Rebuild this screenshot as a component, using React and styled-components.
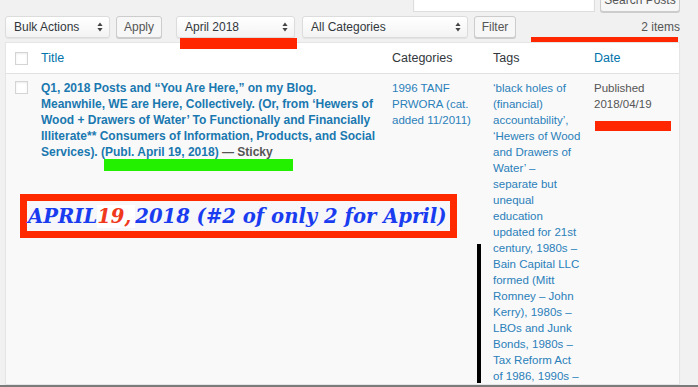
import React from "react"
import styled, { createGlobalStyle } from "styled-components"

const GlobalStyle = createGlobalStyle`
  html, body {
    margin: 0;
    padding: 0;
  }
  body {
    background: #f1f1f1;
    font-family: "Liberation Sans", Arial, sans-serif;
    color: #32373c;
  }
`

const Screen = styled.div`
  position: relative;
  width: 698px;
  height: 387px;
  box-sizing: border-box;
  overflow: hidden;
  padding: 0 18px 0 5px;
  border-bottom: 2px solid #7b7b7b;
`

const SearchRow = styled.div`
  display: flex;
  justify-content: flex-end;
  gap: 5px;
  height: 24px;
  margin-top: -12px;
`

const SearchInput = styled.div`
  width: 182px;
  box-sizing: border-box;
  background: #fff;
  border: 1px solid #ddd;
  box-shadow: inset 0 1px 2px rgba(0, 0, 0, 0.07);
`

const Button = styled.button`
  box-sizing: border-box;
  width: ${(p) => p.$width}px;
  height: ${(p) => p.$height || 22}px;
  margin: 0;
  margin-left: ${(p) => p.$gap || 0}px;
  padding: 0;
  background: #f7f7f7;
  border: 1px solid #ccc;
  border-radius: 3px;
  box-shadow: 0 1px 0 #ccc;
  color: #555;
  font-family: "Liberation Sans", Arial, sans-serif;
  font-size: 12px;
`

const Toolbar = styled.div`
  display: flex;
  align-items: center;
  height: 22px;
  margin-top: 4px;
`

const SelectBox = styled.div`
  box-sizing: border-box;
  display: flex;
  align-items: center;
  justify-content: space-between;
  width: ${(p) => p.$width}px;
  height: 22px;
  margin-left: ${(p) => p.$gap || 0}px;
  padding: 0 6px 0 8px;
  background: linear-gradient(#ffffff, #f3f3f3);
  border: 1px solid #dcdcdc;
  border-radius: 3px;
  box-shadow: 0 1px 1px rgba(0, 0, 0, 0.06);
  font-size: 12px;
  color: #32373c;
`

const Spacer = styled.div`
  flex: 1;
`

const Count = styled.span`
  font-size: 12px;
  color: #555;
`

const Table = styled.div`
  margin-top: 4px;
  background: #fff;
  border: 1px solid #e5e5e5;
  box-shadow: 0 1px 1px rgba(0, 0, 0, 0.04);
`

const Row = styled.div`
  display: grid;
  grid-template-columns: 27px 351px 101px 101px 1fr;
  background: ${(p) => (p.$alt ? "#f9f9f9" : "#fff")};
  border-bottom: ${(p) => (p.$head ? "1px solid #e1e1e1" : "none")};
  min-height: ${(p) => (p.$head ? "30px" : "auto")};
  align-items: ${(p) => (p.$head ? "center" : "start")};
`

const Cell = styled.div`
  padding: ${(p) => (p.$head ? "0 8px" : "6px 8px 0")};
  padding-left: ${(p) => (p.$check ? 9 : 8)}px;
  font-size: ${(p) => (p.$head ? 12.5 : 11.5)}px;
  line-height: 16px;
  white-space: nowrap;
  color: ${(p) => p.$color || "#32373c"};
`

const Checkbox = styled.span`
  display: block;
  width: 13px;
  height: 13px;
  box-sizing: border-box;
  margin-top: ${(p) => (p.$row ? 1 : 0)}px;
  background: #fff;
  border: 1px solid #d4d4d4;
  box-shadow: inset 0 1px 2px rgba(0, 0, 0, 0.08);
`

const RowTitle = styled.div`
  font-size: 12px;
  font-weight: bold;
  color: #1a78b0;
`

const State = styled.span`
  color: #555;
`

const Link = styled.div`
  color: #2a80b9;
`

const Mark = styled.div`
  position: absolute;
  left: ${(p) => p.$x}px;
  top: ${(p) => p.$y}px;
  width: ${(p) => p.$w}px;
  height: ${(p) => p.$h}px;
  background: ${(p) => p.$color};
`

const Callout = styled.div`
  position: absolute;
  left: 20px;
  top: 194px;
  width: 437px;
  height: 44px;
  box-sizing: border-box;
  border: 7px solid #ff2a00;
  background: #f7f7f9;
  display: flex;
  align-items: center;
  padding-left: 1px;
  font-family: "DejaVu Serif", Georgia, serif;
  font-style: italic;
  font-weight: bold;
  font-size: 19.6px;
  color: #1a3cf0;
  white-space: nowrap;
`

const Day = styled.span`
  background: #fff;
  color: #f0391c;
  padding-right: 4px;
`

const Arrows = () => (
  <svg width="6" height="10" viewBox="0 0 6 10">
    <path d="M3 0.5 L5.6 4 H0.4 Z M3 9.5 L5.6 6 H0.4 Z" fill="#444" />
  </svg>
)

const titleLines = [
  "Q1, 2018 Posts and \u201cYou Are Here,\u201d on my Blog.",
  "Meanwhile, WE are Here, Collectively. (Or, from \u2018Hewers of",
  "Wood + Drawers of Water\u2019 To Functionally and Financially",
  "Illiterate** Consumers of Information, Products, and Social",
]

const tagLines = [
  "\u2018black holes of",
  "(financial)",
  "accountability\u2019,",
  "\u2018Hewers of Wood",
  "and Drawers of",
  "Water\u2019 \u2013",
  "separate but",
  "unequal",
  "education",
  "updated for 21st",
  "century, 1980s \u2013",
  "Bain Capital LLC",
  "formed (Mitt",
  "Romney \u2013 John",
  "Kerry), 1980s \u2013",
  "LBOs and Junk",
  "Bonds, 1980s \u2013",
  "Tax Reform Act",
  "of 1986, 1990s \u2013",
]

const Lines = ({ lines }) =>
  lines.map((line) => <div key={line}>{line}</div>)

const App = () => (
  <Screen>
    <GlobalStyle />
    <SearchRow>
      <SearchInput />
      <Button $width={80} $height={24}>
        Search Posts
      </Button>
    </SearchRow>

    <Toolbar>
      <SelectBox $width={105}>
        Bulk Actions
        <Arrows />
      </SelectBox>
      <Button $width={46} $gap={6}>
        Apply
      </Button>
      <SelectBox $width={119} $gap={14}>
        April 2018
        <Arrows />
      </SelectBox>
      <SelectBox $width={166} $gap={7}>
        All Categories
        <Arrows />
      </SelectBox>
      <Button $width={42} $gap={6}>
        Filter
      </Button>
      <Spacer />
      <Count>2 items</Count>
    </Toolbar>

    <Table>
      <Row $head>
        <Cell $head $check>
          <Checkbox />
        </Cell>
        <Cell $head $color="#0073aa">
          Title
        </Cell>
        <Cell $head>Categories</Cell>
        <Cell $head>Tags</Cell>
        <Cell $head $color="#0073aa">
          Date
        </Cell>
      </Row>
      <Row $alt>
        <Cell $check>
          <Checkbox $row />
        </Cell>
        <Cell>
          <RowTitle>
            <Lines lines={titleLines} />
            <div>
              Services). (Publ. April 19, 2018) <State>— Sticky</State>
            </div>
          </RowTitle>
        </Cell>
        <Cell>
          <Link>
            <Lines lines={["1996 TANF", "PRWORA (cat.", "added 11/2011)"]} />
          </Link>
        </Cell>
        <Cell>
          <Link>
            <Lines lines={tagLines} />
          </Link>
        </Cell>
        <Cell $color="#555">
          <Lines lines={["Published", "2018/04/19"]} />
        </Cell>
      </Row>
    </Table>

    <Mark $x={180} $y={38} $w={117} $h={11} $color="#ff2600" />
    <Mark $x={531} $y={37} $w={147} $h={5} $color="#ff2600" />
    <Mark $x={595} $y={121} $w={76} $h={10} $color="#ff2600" />
    <Mark $x={104} $y={159} $w={189} $h={12} $color="#22f000" />
    <Mark $x={477} $y={244} $w={4} $h={139} $color="#000" />

    <Callout>
      APRIL<Day>19,</Day> 2018 (#2 of only 2 for April)
    </Callout>
  </Screen>
)

export default App
